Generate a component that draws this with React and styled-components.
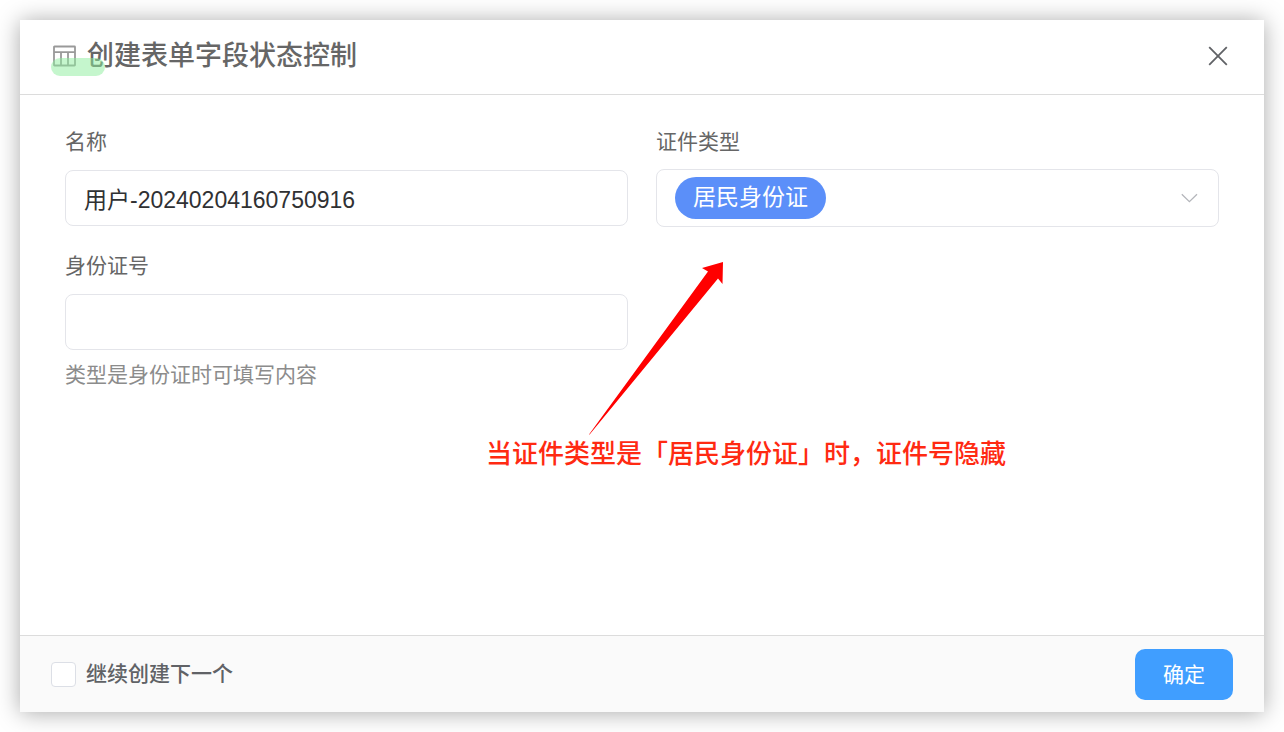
import React, { useState } from "react";
import styled, { createGlobalStyle } from "styled-components";

const GlobalStyle = createGlobalStyle`
    *, *::before, *::after {
        box-sizing: border-box;
    }
    body {
        margin: 0;
        background: #ffffff;
    }
    body, input, select, button {
        font-family: "Liberation Sans", "Noto Sans CJK SC", sans-serif;
    }
`
const Page = styled.div`
    display: flex;
    min-height: 100vh;
    padding: 20px;
`
const Dialog = styled.form`
    position: relative;
    flex: 1;
    display: flex;
    flex-direction: column;
    background: #ffffff;
    box-shadow: 0 1px 22px rgba(0, 0, 0, 0.34);
`
const Header = styled.header`
    display: flex;
    align-items: center;
    justify-content: space-between;
    height: 75px;
    padding: 0 32px 2px;
    border-bottom: 1px solid #dcdcdc;
`
const Heading = styled.div`
    position: relative;
    display: flex;
    align-items: center;
    gap: 10px;
`
const Title = styled.h1`
    margin: 0;
    font-size: 27px;
    font-weight: 500;
    line-height: 40px;
    color: #666666;
`
const Highlight = styled.span`
    position: absolute;
    left: -1px;
    bottom: 0;
    width: 54px;
    height: 18px;
    border-radius: 9px;
    background: rgba(140, 238, 155, 0.5);
`
const CloseButton = styled.button`
    display: flex;
    padding: 4px;
    border: none;
    background: transparent;
    color: #606266;
    cursor: pointer;
    &:hover {
        color: #409eff;
    }
`
const Body = styled.main`
    flex: 1;
    display: grid;
    grid-template-columns: 1fr 1fr;
    align-content: start;
    gap: 21px 28px;
    padding: 29px 45px;
`
const Field = styled.div`
    min-width: 0;
`
const Label = styled.label`
    display: block;
    margin-bottom: 9px;
    font-size: 21px;
    line-height: 36px;
    color: #666666;
`
const Control = styled.div`
    display: flex;
    align-items: center;
    height: 58px;
`
const TextInput = styled.input`
    width: 100%;
    height: 56px;
    padding: 0 18px;
    border: 1px solid #e4e5ea;
    border-radius: 8px;
    outline: none;
    background: #ffffff;
    color: #303133;
    font-size: 23px;
    &:focus {
        border-color: #409eff;
    }
`
const SelectBox = styled(Control)`
    justify-content: space-between;
    padding: 0 18px;
    border: 1px solid #e4e5ea;
    border-radius: 8px;
    color: #b4b6bb;
`
const TagSelect = styled.select`
    appearance: none;
    height: 42px;
    padding: 0 18px 2px;
    border: none;
    border-radius: 21px;
    outline: none;
    background: #5b8ff9;
    color: #ffffff;
    font-size: 23px;
    cursor: pointer;
`
const Hint = styled.p`
    margin: 6px 0 0;
    font-size: 21px;
    line-height: 36px;
    color: #8c8c8c;
`
const Note = styled.p`
    position: absolute;
    top: 414px;
    left: 466px;
    margin: 0;
    font-size: 26px;
    font-weight: 500;
    line-height: 40px;
    white-space: nowrap;
    color: #ff2a12;
`
const Arrow = styled.svg`
    position: absolute;
    top: 240px;
    left: 568px;
    pointer-events: none;
`
const Footer = styled.footer`
    display: flex;
    align-items: center;
    justify-content: space-between;
    height: 77px;
    padding: 0 31px;
    border-top: 1px solid #dcdcdc;
    background: #fafafa;
`
const CheckLabel = styled.label`
    display: flex;
    align-items: center;
    gap: 10px;
    font-size: 21px;
    font-weight: 500;
    line-height: 36px;
    color: #606266;
    cursor: pointer;
`
const Checkbox = styled.input`
    appearance: none;
    width: 25px;
    height: 25px;
    margin: 0;
    border: 1px solid #dcdfe6;
    border-radius: 4px;
    background: #ffffff;
    cursor: pointer;
    &:checked {
        border-color: #409eff;
        background: #409eff;
    }
`
const SubmitButton = styled.button`
    height: 51px;
    padding: 0 28px 2px;
    border: none;
    border-radius: 10px;
    background: #409eff;
    color: #ffffff;
    font-size: 21px;
    cursor: pointer;
    &:hover {
        background: #66b1ff;
    }
`

const TableIcon = () => (
    <svg width="25" height="22" viewBox="0 0 25 22" fill="none" stroke="#999999" strokeWidth="1.8">
        <rect x="2" y="1.5" width="21" height="19" rx="0.5" />
        <path d="M2 7.2h21M9 7.2v13.3M16 7.2v13.3" />
    </svg>
)

const CloseIcon = () => (
    <svg width="20" height="20" viewBox="0 0 20 20" fill="none" stroke="currentColor" strokeWidth="1.8">
        <path d="M1.2 1.2l17.6 17.6M18.8 1.2L1.2 18.8" />
    </svg>
)

const ChevronIcon = () => (
    <svg width="22" height="22" viewBox="0 0 22 22" fill="none" stroke="currentColor" strokeWidth="1.3">
        <path d="M3.8 7.2l7.6 7.4 7.6-7.4" />
    </svg>
)

const App = () => {
    const [name, setName] = useState("用户-20240204160750916")
    const [idNumber, setIdNumber] = useState("")
    const [keepCreating, setKeepCreating] = useState(false)

    return (
        <Page>
            <GlobalStyle />
            <Dialog onSubmit={(e) => e.preventDefault()}>
                <Header>
                    <Heading>
                        <TableIcon />
                        <Title>创建表单字段状态控制</Title>
                        <Highlight />
                    </Heading>
                    <CloseButton type="button" aria-label="关闭">
                        <CloseIcon />
                    </CloseButton>
                </Header>
                <Body>
                    <Field>
                        <Label htmlFor="name">名称</Label>
                        <Control>
                            <TextInput id="name" value={name} onChange={(e) => setName(e.target.value)} />
                        </Control>
                    </Field>
                    <Field>
                        <Label htmlFor="idType">证件类型</Label>
                        <SelectBox>
                            <TagSelect id="idType" defaultValue="resident">
                                <option value="resident">居民身份证</option>
                            </TagSelect>
                            <ChevronIcon />
                        </SelectBox>
                    </Field>
                    <Field>
                        <Label htmlFor="idNumber">身份证号</Label>
                        <Control>
                            <TextInput id="idNumber" value={idNumber} onChange={(e) => setIdNumber(e.target.value)} />
                        </Control>
                        <Hint>类型是身份证时可填写内容</Hint>
                    </Field>
                </Body>
                <Footer>
                    <CheckLabel>
                        <Checkbox
                            type="checkbox"
                            checked={keepCreating}
                            onChange={(e) => setKeepCreating(e.target.checked)}
                        />
                        继续创建下一个
                    </CheckLabel>
                    <SubmitButton type="submit">确定</SubmitButton>
                </Footer>
                <Arrow width="136" height="176" viewBox="0 0 136 176" fill="#ff0000">
                    <path d="M1 174.5L120 11.5L114 8L135 2L134.5 24L130 18.5L1.6 174.5Z" />
                </Arrow>
                <Note>当证件类型是「居民身份证」时，证件号隐藏</Note>
            </Dialog>
        </Page>
    )
}
export default App
